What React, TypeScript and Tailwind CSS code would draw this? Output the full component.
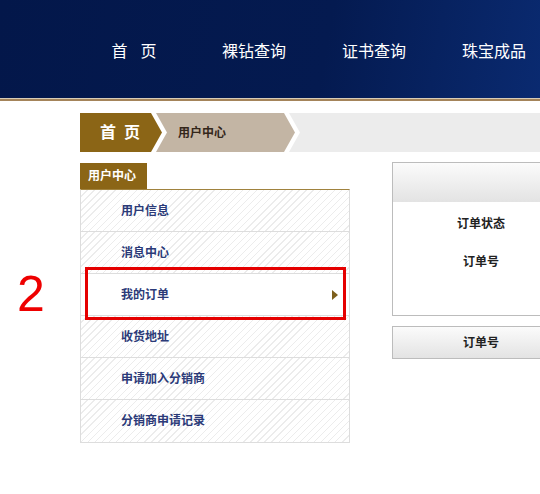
import { ReactNode } from 'react';

const navItems = ['首页', '裸钻查询', '证书查询', '珠宝成品'];
const menuItems = ['用户信息', '消息中心', '我的订单', '收货地址', '申请加入分销商', '分销商申请记录'];

const chevron = '[clip-path:polygon(0_0,calc(100%-11px)_0,100%_50%,calc(100%-11px)_100%,0_100%)]';

const Crumb = ({ children, className, inner, z }: { children: ReactNode; className: string; inner: string; z: string }) => (
  <div className={`relative ${z} shrink-0 h-full bg-white pr-[5px] ${chevron} ${className}`}>
    <div className={`h-full flex items-center ${chevron} ${inner}`}>{children}</div>
  </div>
);

export default function App() {
  return (
    <div className="relative w-[540px] h-[494px] overflow-hidden bg-white font-['Liberation_Sans','Noto_Sans_CJK_SC',sans-serif]">
      {/* Header */}
      <header className="h-[98px] bg-[linear-gradient(100deg,#03174a_0%,#041a50_60%,#0a2a70_100%)]">
        <nav className="flex pl-[74px] pt-[42px]">
          {navItems.map((item, i) => (
            <a key={i} className="shrink-0 w-[120px] text-center text-[16px] leading-[20px] text-white">
              {i === 0 ? (
                <>
                  <span className="mr-[13px]">首</span>页
                </>
              ) : (
                item
              )}
            </a>
          ))}
        </nav>
      </header>
      <div className="h-px bg-[#d8ccb6]" />
      <div className="h-[2px] bg-[#a4845a]" />

      <main className="pl-[80px] pt-[12px]">
        {/* Breadcrumb */}
        <div className="flex h-[39px] bg-[#ececec]">
          <Crumb z="z-20" className="w-[87px]" inner="bg-[#8b6516] pl-[20px] text-[16px] font-bold text-white">
            <span className="mr-[8px]">首</span>页
          </Crumb>
          <Crumb z="z-10" className="-ml-[12px] w-[145px]" inner="bg-[#c3b5a4] pl-[23px] text-[12px] font-bold text-[#33261a]">
            用户中心
          </Crumb>
        </div>

        <div className="flex mt-[10px]">
          {/* Sidebar */}
          <aside className="w-[270px] shrink-0 pt-px">
            <div className="w-[67px] h-[26px] bg-[#8b6516] pl-[8px] text-[12px] leading-[26px] font-bold text-white">用户中心</div>
            <ul className="border-t border-t-[#a0823e] border-x border-b border-x-[#dddddd] border-b-[#dddddd]">
              {menuItems.map((item, i) => (
                <li
                  key={i}
                  className={`flex items-center justify-between h-[42px] pl-[40px] pr-[11px] text-[12px] font-bold text-[#2b3a78] ${
                    i < menuItems.length - 1 ? 'border-b border-[#dddddd]' : 'h-[41px]'
                  } ${
                    i === 2
                      ? 'bg-white'
                      : '[background-image:repeating-linear-gradient(135deg,#ffffff_0px,#ffffff_4px,#ececec_4px,#ececec_5px)]'
                  }`}
                >
                  <span>{item}</span>
                  {i === 2 && <span className="w-0 h-0 border-l-[6px] border-l-[#7d5f1c] border-y-[5px] border-y-transparent" />}
                </li>
              ))}
            </ul>
          </aside>

          {/* Orders panel */}
          <section className="ml-[42px] w-[300px] shrink-0">
            <div className="border border-[#bcbcbc] h-[154px]">
              <div className="h-[39px] bg-[linear-gradient(#fbfbfb,#e3e3e3)]" />
              <div className="pt-[3px] w-[176px] text-[12px] font-bold text-[#222]">
                <div className="h-[38px] flex items-center justify-center">订单状态</div>
                <div className="h-[38px] flex items-center justify-center">订单号</div>
              </div>
            </div>
            <div className="mt-[10px] border border-[#bcbcbc] h-[33px] bg-[linear-gradient(#fbfbfb,#e3e3e3)]">
              <div className="w-[176px] h-full flex items-center justify-center text-[12px] font-bold text-[#222]">订单号</div>
            </div>
          </section>
        </div>
      </main>

      {/* Annotation */}
      <div className="absolute left-[17px] top-[266px] text-[50px] leading-[56px] text-[#ee0000]">2</div>
      <div className="absolute left-[85px] top-[267px] w-[261px] h-[53px] border-[3px] border-[#e50000]" />
    </div>
  );
}
